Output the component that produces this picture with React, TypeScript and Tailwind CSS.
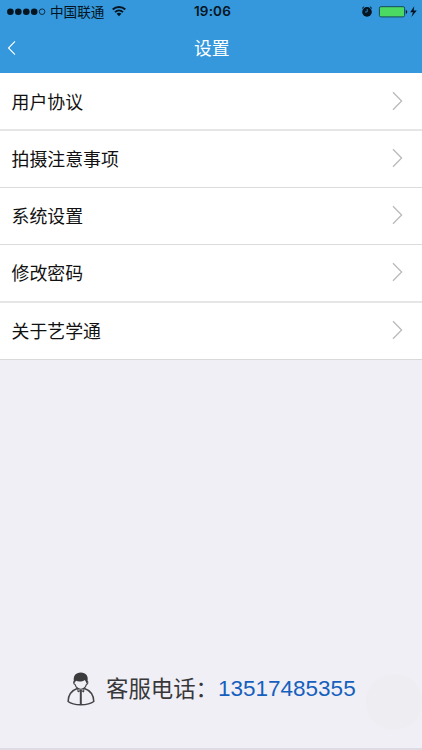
import { clsx } from "clsx";

const menuItems = [
  { label: "用户协议", height: "h-[58px] pt-px", border: "border-b-2 border-[#e6e6e6]" },
  { label: "拍摄注意事项", height: "h-[57px]", border: "border-b border-[#dcdcdc]" },
  { label: "系统设置", height: "h-[57px]", border: "border-b border-[#dcdcdc]" },
  { label: "修改密码", height: "h-[58px]", border: "border-b-2 border-[#e6e6e6]" },
  { label: "关于艺学通", height: "h-[57px]", border: "border-b border-[#d9d9dc]" },
];

const StatusBar = () => {
  return (
    <div className="flex h-[23px] items-center text-[#041421]">
      <svg width="40" height="23" viewBox="0 0 40 23" className="ml-[7px] shrink-0">
        <g fill="currentColor">
          <circle cx="3.4" cy="11.7" r="3.3" />
          <circle cx="11.3" cy="11.7" r="3.3" />
          <circle cx="19.3" cy="11.7" r="3.3" />
          <circle cx="27.2" cy="11.7" r="3.3" />
        </g>
        <circle cx="35.1" cy="11.7" r="2.8" fill="none" stroke="currentColor" strokeWidth="0.8" />
      </svg>
      <span className="ml-[3px] w-[55px] pt-px text-[13.6px] leading-[23px] whitespace-nowrap">中国联通</span>
      <svg width="14" height="23" viewBox="0 0 14 23" className="ml-[7px] shrink-0">
        <g fill="none" stroke="currentColor" strokeWidth="1.9">
          <path d="M.7 9.5C4.2 6.1 9.8 6.1 13.3 9.5" />
          <path d="M3 12.1C5.3 10 8.7 10 11 12.1" />
        </g>
        <path d="M4.6 13.8C6 12.5 8 12.5 9.4 13.8L7 16.2Z" fill="currentColor" />
      </svg>
      <span className="ml-[68px] w-[40px] font-[Inter,sans-serif] text-[13.5px] font-semibold leading-[23px] tracking-[0.15px]">
        19:06
      </span>
      <svg width="56" height="23" viewBox="0 0 56 23" className="ml-[127px] shrink-0">
        <circle cx="6" cy="11.9" r="4.8" fill="currentColor" />
        <path d="M1 8.5L3.1 6.6M8.9 6.6L11 8.5" stroke="currentColor" strokeWidth="1" />
        <path d="M6.2 9V12H4" fill="none" stroke="#3598dc" strokeWidth="0.8" />
        <rect x="18.4" y="6.7" width="25.2" height="10.2" rx="1.5" fill="#4bd964" stroke="#154a5c" strokeWidth="1" />
        <path d="M44.8 9.9C46.7 10.2 46.7 13.4 44.8 13.7Z" fill="currentColor" />
        <path d="M53.2 6.2L49.2 12.2H52L50.4 17L55.8 10.6H52.7Z" fill="currentColor" />
      </svg>
    </div>
  );
};

const Header = () => {
  return (
    <header className="h-[73px] bg-[#3598dc]">
      <StatusBar />
      <div className="flex h-[50px] items-center text-white">
        <svg width="10" height="16" viewBox="0 0 10 16" className="mb-px ml-[7px]">
          <path d="M8 1.3L1.5 8L8 14.7" fill="none" stroke="currentColor" strokeWidth="1.1" />
        </svg>
        <h1 className="ml-[177px] pt-[2px] text-[17.8px] leading-[48px]">设置</h1>
      </div>
    </header>
  );
};

const SupportIcon = () => {
  return (
    <svg width="28" height="34" viewBox="0 0 28 34" className="shrink-0">
      <path
        d="M7.2 10C5.5 4.2 8.7 .6 13.8 .6S22 4.2 20.3 10L19.7 12C19.2 10.4 18.7 9.1 17.8 8.1C15.2 9.9 11.2 10 9 8.8C8.1 9.8 7.9 10.9 7.7 12Z"
        fill="#3b3b3e"
      />
      <g fill="none" stroke="#444447" strokeWidth="1.5" strokeLinejoin="round">
        <path d="M7.3 9C6 10.1 6.8 12.2 8.1 12.5C9 15.5 11.2 17.2 13.8 17.2S18.5 15.5 19.4 12.5C20.8 12.2 21.4 10.1 20.2 9" strokeWidth="1.1" />
        <path d="M10.7 16.3C5.5 18.2 1.2 22.7 1.1 29.5C4.5 32.3 9.2 32.8 13.8 32.8S23.2 32.3 26.8 29.5C26.7 22.7 22.4 18.2 17 16.3" />
        <path d="M10.7 16.3L11.1 19.8L13.8 18.3L16.6 19.8L17 16.3" strokeWidth="1.1" />
        <path d="M13.8 18.6V32.5" strokeWidth="2" />
      </g>
    </svg>
  );
};

const App = () => {
  return (
    <div className="relative flex h-[750px] w-[422px] flex-col overflow-hidden bg-[#f0eff5] font-['Liberation_Sans','Noto_Sans_CJK_SC',sans-serif]">
      <Header />
      <ul className="bg-white">
        {menuItems.map((item) => (
          <li
            key={item.label}
            className={clsx("flex items-center justify-between pl-[11.5px] pr-[19px]", item.height, item.border)}
          >
            <span className="pt-[2px] text-[17.9px] leading-6 text-[#111]">{item.label}</span>
            <svg width="11" height="20" viewBox="0 0 11 20" className="mb-[2px]">
              <path d="M1 1.2L9.6 10L1 18.8" fill="none" stroke="#bababa" strokeWidth="1.3" />
            </svg>
          </li>
        ))}
      </ul>
      <footer className="mt-auto flex h-[80px] items-start border-b-2 border-[#dddce2] pl-[67px]">
        <div className="flex h-[37px] items-center">
          <SupportIcon />
          <span className="ml-[11px] w-[113px] pt-[2px] text-[22.4px] leading-9 whitespace-nowrap text-[#38383b]">
            客服电话：
          </span>
          <a href="tel:13517485355" className="-ml-px text-[22.5px] leading-9 text-[#1560bd]">
            13517485355
          </a>
        </div>
      </footer>
      {/* floating assistive button */}
      <div className="absolute top-[674px] left-[366px] size-[56px] rounded-full bg-[#eeedf1]" />
    </div>
  );
};

export default App;
